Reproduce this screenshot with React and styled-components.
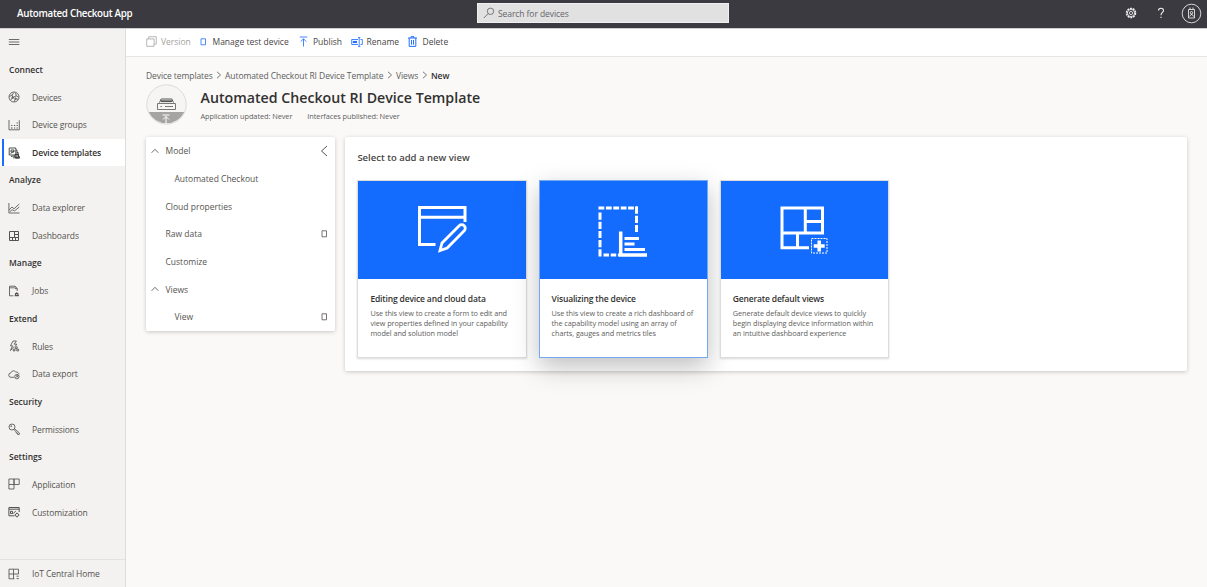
import React from "react";
import styled, { createGlobalStyle } from "styled-components";

const Svg = ({ size = 12, w, h, box, children }) => (
  <svg
    width={w || size}
    height={h || size}
    viewBox={box || "0 0 12 12"}
    fill="none"
    stroke="currentColor"
    strokeWidth="0.85"
  >
    {children}
  </svg>
);

const icons = {
  devices: (
    <Svg>
      <circle cx="6" cy="6" r="5" />
      <path d="M1.5 5.5L4 4l2-2.5M4 4l.8 2.5L2.5 9.2M4.8 6.5l3.4-1.6L7.6 2M8.2 4.9l2.4 1.3M6.2 10.7l1.2-3 2.8.7" />
      <circle cx="4.7" cy="6.6" r=".9" />
      <circle cx="7.5" cy="7.6" r=".7" />
    </Svg>
  ),
  groups: (
    <Svg>
      <path d="M1 1v9.800h10.300V1.300" />
      <path d="M3 9h1.500M6 9h1.200M8.500 9h1.200M3.200 6.500h1.200M6 6.500h1.200M8.600 6.500h1.200M8.600 4h1.200" strokeWidth="1.200" />
    </Svg>
  ),
  templates: (
    <Svg>
      <path d="M1.200 1h6.600v7H1.200zM3 3h3v2H3zM2.500 6.500L6 4M8 3h1v6.200H3.500V10M9 5.500h1.200v5.300H5" />
      <path d="M7 7.500h3.500v2.800H7zM10.500 9.500h1v1.700H7.500" />
    </Svg>
  ),
  explorer: (
    <Svg>
      <path d="M.9 1v10h10.600M1 8l3-3 2 1.800L11.300 2M2 9.500l2.200-1.700 2.500 1L11.300 5" />
    </Svg>
  ),
  dashboards: (
    <Svg>
      <path d="M1.500 1.500h9v9h-9zM6.500 1.500v6M1.500 7.500h9M4.500 7.500v3M6.500 4.500h4M7.500 7.500v3" strokeWidth="1" />
    </Svg>
  ),
  jobs: (
    <Svg>
      <path d="M5.500 10.800h-4V1.200H7l2.200 2.200V6M7 1.200v2.400h2.200M2 2.800h4" />
      <path d="M6.700 10.600h4.200M7.500 10.400V8.600h2.400v1.800M8.700 7.300v1.200" strokeWidth="1.100" />
    </Svg>
  ),
  rules: (
    <Svg>
      <path d="M8.400 1H5L2.500 5.800h2L2.400 10.600 6 6.500M8.400 1L6.200 4.200h2.600L7.500 6" />
      <path d="M7.200 6.800h2v1.600h-2zM5.200 9.200h1.800v1.700H5.200zM8.800 9.200h1.800v1.700H8.800z" />
    </Svg>
  ),
  export: (
    <Svg>
      <path d="M6 9.300H3A2.100 2.100 0 012.800 5c.5-2.200 3.400-3 5-1 1.700-.1 3 .8 3.200 2.300" />
      <circle cx="8.900" cy="8.600" r="2.200" />
      <path d="M7.700 9.700l2-2M8.200 7.700h1.500v1.500" />
    </Svg>
  ),
  permissions: (
    <Svg>
      <circle cx="4" cy="4" r="3" />
      <circle cx="3.200" cy="3.200" r=".5" />
      <path d="M6.400 5.600l4.900 4.300v1.500H9.500V10H8.200V8.800L5.700 6.500" />
    </Svg>
  ),
  application: (
    <Svg>
      <path d="M.9 1h10.300v5.500H.9zM6 1v10H.9V6.500M6 6.500V1" />
    </Svg>
  ),
  customization: (
    <Svg>
      <path d="M6.500 9.800H.9V1.500h10.300V6M.9 3.200h10.300M2.500 5.300h2v2.300h-2zM5.200 7.600L7.700 5" strokeWidth="1" />
      <circle cx="9" cy="9" r="1.600" />
      <path d="M9 6.600v1M9 10.400v1M6.600 9h1M10.400 9h1" />
    </Svg>
  ),
  home: (
    <Svg>
      <path d="M6.500 10.800H1V1.200h9.500V6M5.500 1.200v9.600M1 6h9.500M8.500 8.200h2.300M8.500 10.600h2.300" />
    </Svg>
  ),
};

const nav = [
  { title: "Connect" },
  { icon: "devices", label: "Devices" },
  { icon: "groups", label: "Device groups" },
  { icon: "templates", label: "Device templates", active: true },
  { title: "Analyze" },
  { icon: "explorer", label: "Data explorer" },
  { icon: "dashboards", label: "Dashboards" },
  { title: "Manage" },
  { icon: "jobs", label: "Jobs" },
  { title: "Extend" },
  { icon: "rules", label: "Rules" },
  { icon: "export", label: "Data export" },
  { title: "Security" },
  { icon: "permissions", label: "Permissions" },
  { title: "Settings" },
  { icon: "application", label: "Application" },
  { icon: "customization", label: "Customization" },
];

const tree = [
  { label: "Model", open: true, collapse: true },
  { label: "Automated Checkout", child: true },
  { label: "Cloud properties" },
  { label: "Raw data", device: true },
  { label: "Customize" },
  { label: "Views", open: true },
  { label: "View", child: true, device: true },
];

const EditArt = () => (
  <svg width="56" height="56" viewBox="0 0 56 56" fill="none" stroke="#fff" strokeWidth="3">
    <path d="M22.500 39.500H6.500V2.500h45.500V17M6.500 12.200H52" />
    <path d="M27 45.500l2-7.500 17.200-17.200a3.500 3.500 0 015 5L34.200 43z" strokeWidth="2.800" />
  </svg>
);

const ChartArt = () => (
  <svg width="56" height="56" viewBox="0 0 56 56" fill="none" stroke="#fff" strokeWidth="3">
    <path d="M4.500 3H44" strokeDasharray="5.800 1.600" />
    <path d="M6 7.500V52" strokeDasharray="7.200 2" />
    <path d="M42.500 1.500V28" strokeDasharray="7.200 2" />
    <path d="M9.500 50H25" strokeDasharray="5.500 1.700" />
    <path d="M26.700 26.500V50M25 50h28" strokeWidth="3.500" />
    <path d="M30.500 33.500H45M30.500 39h10M30.500 44.500H51" />
  </svg>
);

const TilesArt = () => (
  <svg width="56" height="56" viewBox="0 0 56 56" fill="none" stroke="#fff" strokeWidth="3">
    <path d="M34 42.700H7V3h40.500v26.500M30.300 3v25M47.500 28H7M30.300 16.500h17.200M22.500 28v14.700" />
    <path d="M36.500 33.500h15.500v14.500h-15.500z" strokeWidth="1" strokeDasharray="2 1" />
    <path d="M44.200 35.500v11M38.700 41h11" strokeWidth="3.500" />
  </svg>
);

const cards = [
  {
    art: <EditArt />,
    title: "Editing device and cloud data",
    lines: ["Use this view to create a form to edit and", "view properties defined in your capability", "model and solution model"],
  },
  {
    art: <ChartArt />,
    title: "Visualizing the device",
    lines: ["Use this view to create a rich dashboard of", "the capability model using an array of", "charts, gauges and metrics tiles"],
    selected: true,
  },
  {
    art: <TilesArt />,
    title: "Generate default views",
    lines: ["Generate default device views to quickly", "begin displaying device information within", "an intuitive dashboard experience"],
  },
];

const PhoneIcon = () => (
  <Svg w={7} h={8} box="0 0 7 8">
    <path d="M1 .8h4.500v6H1z" strokeWidth=".8" />
  </Svg>
);

const Chevron = () => (
  <Svg w={6} h={8} box="0 0 6 8">
    <path d="M1 .8L4.500 4 1 7.200" />
  </Svg>
);

const App = () => {
  return (
    <Page>
      <GlobalStyle />
      <Header>
        <AppName>Automated Checkout App</AppName>
        <Search>
          <Svg size={12}>
            <circle cx="7.500" cy="4.300" r="3.200" />
            <path d="M5.200 6.600L.8 11" />
          </Svg>
          <span>Search for devices</span>
        </Search>
        <HeaderTools>
          <Svg size={12}>
            <circle cx="6" cy="6" r="4.500" strokeWidth="1.500" strokeDasharray="2 .8" />
            <circle cx="6" cy="6" r="3.600" />
            <circle cx="6" cy="6" r="1.600" />
          </Svg>
          <Svg w={8} h={12} box="0 0 8 12">
            <path d="M1.500 3.500C1.500.5 6.500.5 6.500 3.400 6.500 5.500 4 5.500 4 8.300M4 9.700v1.300" strokeWidth="1.100" />
          </Svg>
          <Svg size={21} box="0 0 21 21">
            <circle cx="10.500" cy="10.500" r="9.300" />
            <path d="M7.500 6.500h6v8.500h-6zM9 4.500v2M12 4.500v2M8.700 13.500l1.200-2h1.300l1.200 2" />
            <circle cx="10.500" cy="9.700" r="1.200" />
          </Svg>
        </HeaderTools>
      </Header>
      <Body>
        <Sidebar>
          <NavRow>
            <Svg>
              <path d="M.8 3.500h10.500M.8 6h10.500M.8 8.500h10.500" />
            </Svg>
          </NavRow>
          {nav.map((item) =>
            item.title ? (
              <NavTitle key={item.title}>{item.title}</NavTitle>
            ) : (
              <NavRow key={item.label} $active={item.active}>
                {icons[item.icon]}
                <span>{item.label}</span>
              </NavRow>
            )
          )}
          <HomeRow>
            {icons.home}
            <span>IoT Central Home</span>
          </HomeRow>
        </Sidebar>
        <Main>
          <Toolbar>
            <Tool $width={54} $muted>
              <Svg size={11}>
                <path d="M.8 3.200h8v8h-8zM3 3V.8h8.200v8H9" />
              </Svg>
              <span>Version</span>
            </Tool>
            <Tool $width={99} $gap={5.5}>
              <PhoneIcon />
              <span>Manage test device</span>
            </Tool>
            <Tool $width={52} $gap={5}>
              <Svg w={9} h={11} box="0 0 9 11">
                <path d="M.8 1h7.400M4.500 10.500V3M1.700 5.600l2.800-2.800 2.800 2.800" />
              </Svg>
              <span>Publish</span>
            </Tool>
            <Tool $width={57} $gap={3.5}>
              <Svg w={12} h={10} box="0 0 12 10">
                <path d="M7 7.500H.7v-5H7M9.500 2.500h1.800v5H9.500M8.200.5v9M7 .6h2.400M7 9.400h2.400" />
                <path d="M1.800 5H6" strokeWidth="2.200" />
              </Svg>
              <span>Rename</span>
            </Tool>
            <Tool $width={42} $gap={5.5}>
              <Svg w={9} h={11} box="0 0 9 11">
                <path d="M0 2h9M3 2V.7h3V2M1.200 2v8.400h6.600V2M3.500 4v4.700M5.500 4v4.700" strokeWidth="1" />
              </Svg>
              <span>Delete</span>
            </Tool>
          </Toolbar>
          <Content>
            <Crumbs>
              <Crumb $width={67}>Device templates</Crumb>
              <Chevron />
              <Crumb $width={159}>Automated Checkout RI Device Template</Crumb>
              <Chevron />
              <Crumb $width={23}>Views</Crumb>
              <Chevron />
              <Crumb $strong>New</Crumb>
            </Crumbs>
            <TemplateHead>
              <svg width="41" height="41" viewBox="0 0 41 41" fill="none">
                <circle cx="20.500" cy="20.500" r="19.700" fill="#f6f5f4" />
                <path d="M2.700 28h35.600a19.700 19.700 0 01-35.600 0z" fill="#a5a4a3" />
                <circle cx="20.500" cy="20.500" r="19.700" stroke="#d4d3d2" strokeWidth=".8" />
                <path d="M13.500 18.500l1.700-3.500h10.600l1.700 3.500" stroke="#555" />
                <path d="M15 17.200h11" stroke="#555" strokeWidth="1.800" />
                <path d="M11.500 19.500h18v6h-18z" stroke="#777" />
                <path d="M14.500 22.500h1.500M19 22.500h8" stroke="#777" />
                <path d="M16.500 31h7M20 40v-7.500M17 35.500l3-3 3 3" stroke="#fff" />
              </svg>
              <div>
                <Title>Automated Checkout RI Device Template</Title>
                <Meta>
                  <span>Application updated: Never</span>
                  <span>Interfaces published: Never</span>
                </Meta>
              </div>
            </TemplateHead>
            <Panels>
              <TreePanel>
                {tree.map((row) => (
                  <TreeRow key={row.label} $child={row.child}>
                    <TreeArrow>
                      {row.open && (
                        <Svg w={8} h={6} box="0 0 8 6">
                          <path d="M.6 4.800L4 1.300l3.400 3.500" />
                        </Svg>
                      )}
                    </TreeArrow>
                    <TreeLabel>{row.label}</TreeLabel>
                    {row.collapse && (
                      <Svg w={8} h={12} box="0 0 8 12">
                        <path d="M7 1L1.500 6 7 11" strokeWidth="1" />
                      </Svg>
                    )}
                    {row.device && <PhoneIcon />}
                  </TreeRow>
                ))}
              </TreePanel>
              <ViewPanel>
                <PanelTitle>Select to add a new view</PanelTitle>
                <Cards>
                  {cards.map((card) => (
                    <Card key={card.title} $selected={card.selected}>
                      <Art>{card.art}</Art>
                      <CardBody>
                        <CardTitle>{card.title}</CardTitle>
                        {card.lines.map((line) => (
                          <CardLine key={line}>{line}</CardLine>
                        ))}
                      </CardBody>
                    </Card>
                  ))}
                </Cards>
              </ViewPanel>
            </Panels>
          </Content>
        </Main>
      </Body>
    </Page>
  );
};
export default App;

const GlobalStyle = createGlobalStyle`
  * {
    box-sizing: border-box;
  }
  body {
    margin: 0;
    overflow: hidden;
    font-family: "Open Sans", "Noto Sans", sans-serif;
    font-size: 8.5px;
    color: #484644;
    white-space: nowrap;
  }
  svg {
    display: block;
    flex-shrink: 0;
  }
`;
const Page = styled.div`
  width: 1207px;
  height: 587px;
  display: flex;
  flex-direction: column;
  background: #faf9f8;
`;
const Header = styled.header`
  height: 29px;
  display: grid;
  grid-template-columns: 477px 252px 1fr;
  align-items: center;
  padding-bottom: 2px;
  background: #3b3a40;
  border-bottom: 1px solid #cfcecf;
`;
const AppName = styled.div`
  padding-left: 17px;
  font-size: 9.8px;
  font-weight: 600;
  letter-spacing: -0.28px;
  color: #fff;
`;
const Search = styled.div`
  height: 20px;
  display: flex;
  align-items: center;
  gap: 3px;
  padding-left: 5px;
  background: #e1e1e1;
  border: 1px solid #f0f0f0;
  letter-spacing: -0.08px;
  color: #66646a;
`;
const HeaderTools = styled.div`
  display: flex;
  align-items: center;
  justify-content: flex-end;
  gap: 20px;
  padding-right: 5px;
  color: #f0f0f0;
  svg:last-child {
    margin-left: -4px;
  }
`;
const Body = styled.div`
  flex: 1;
  display: flex;
`;
const Sidebar = styled.nav`
  width: 126px;
  display: flex;
  flex-direction: column;
  background: #f3f2f1;
  border-right: 1px solid #dddcdb;
`;
const NavRow = styled.div`
  height: 27.66px;
  display: flex;
  align-items: center;
  gap: 12px;
  padding-left: ${(props) => (props.$active ? "4px" : "8px")};
  margin-left: ${(props) => (props.$active ? "2px" : "0")};
  border-left: ${(props) => (props.$active ? "2px solid #1a6dff" : "none")};
  background: ${(props) => (props.$active ? "#fff" : "transparent")};
  box-shadow: ${(props) => (props.$active ? "-2px 0 0 #fff" : "none")};
  font-weight: ${(props) => (props.$active ? 600 : 400)};
  letter-spacing: -0.1px;
  color: ${(props) => (props.$active ? "#323130" : "#55534f")};
  &:first-child {
    height: 26.8px;
  }
`;
const NavTitle = styled.div`
  height: 27.66px;
  line-height: 27.66px;
  padding-left: 9px;
  font-weight: 600;
  color: #323130;
`;
const HomeRow = styled(NavRow)`
  height: 28px;
  margin-top: auto;
  border-top: 1px solid #e3e2e1;
`;
const Main = styled.main`
  flex: 1;
`;
const Toolbar = styled.div`
  height: 28px;
  display: flex;
  align-items: center;
  padding: 0 0 2px 20px;
  background: #fff;
  border-bottom: 1px solid #e6e5e4;
`;
const Tool = styled.div`
  width: ${(props) => props.$width}px;
  display: flex;
  align-items: center;
  gap: ${(props) => props.$gap || 4}px;
  color: ${(props) => (props.$muted ? "#a3a2a0" : "#484644")};
  svg {
    color: ${(props) => (props.$muted ? "#a3a2a0" : "#246fff")};
  }
`;
const Content = styled.div`
  padding: 11px 20px 0;
`;
const Crumbs = styled.div`
  height: 14px;
  display: flex;
  align-items: center;
  gap: 3px;
  color: #605e5c;
`;
const Crumb = styled.span`
  width: ${(props) => (props.$width ? `${props.$width}px` : "auto")};
  font-weight: ${(props) => (props.$strong ? 600 : 400)};
  letter-spacing: -0.08px;
  color: ${(props) => (props.$strong ? "#323130" : "#605e5c")};
`;
const TemplateHead = styled.div`
  height: 55px;
  display: flex;
  align-items: flex-start;
  gap: 14px;
  padding-top: 2px;
  svg {
    margin-left: -0.5px;
  }
`;
const Title = styled.h1`
  margin: 4px 0 0;
  font-size: 14.2px;
  line-height: 20px;
  font-weight: 600;
  color: #323130;
`;
const Meta = styled.div`
  display: flex;
  gap: 15px;
  font-size: 7.4px;
  line-height: 16px;
  letter-spacing: -0.08px;
  color: #605e5c;
`;
const Panels = styled.div`
  display: flex;
  align-items: flex-start;
  gap: 10px;
`;
const TreePanel = styled.div`
  width: 189px;
  height: 194px;
  background: #fff;
  border-radius: 2px;
  box-shadow: 0 1px 4px rgba(0, 0, 0, 0.2);
`;
const TreeRow = styled.div`
  height: 27.66px;
  display: flex;
  align-items: center;
  padding: 0 7px 0 ${(props) => (props.$child ? 14 : 5)}px;
  color: #55534f;
`;
const TreeArrow = styled.div`
  width: 14.5px;
`;
const TreeLabel = styled.span`
  flex: 1;
`;
const ViewPanel = styled.section`
  width: 842px;
  height: 234px;
  padding: 12px 12.4px;
  background: #fff;
  border-radius: 2px;
  box-shadow: 0 1px 4px rgba(0, 0, 0, 0.2);
`;
const PanelTitle = styled.h2`
  height: 31px;
  margin: 0;
  font-size: 9.5px;
  line-height: 17px;
  font-weight: 600;
  color: #484644;
`;
const Cards = styled.div`
  display: flex;
  gap: 12px;
`;
const Card = styled.div`
  width: 169.200px;
  height: 178px;
  border: 1px solid ${(props) => (props.$selected ? "#72aaf2" : "#dcdcdc")};
  background: #fff;
  box-shadow: ${(props) =>
    props.$selected ? "0 9px 24px rgba(0, 0, 0, 0.25)" : "0 1px 2px rgba(0, 0, 0, 0.15)"};
`;
const Art = styled.div`
  height: 98px;
  display: flex;
  align-items: center;
  justify-content: center;
  padding: 5px 2px 0 0;
  background: #146cff;
`;
const CardBody = styled.div`
  padding: 13px 0 0 12px;
`;
const CardTitle = styled.div`
  height: 16px;
  line-height: 14px;
  font-size: 8.5px;
  font-weight: 600;
  letter-spacing: -0.16px;
  color: #323130;
`;
const CardLine = styled.div`
  font-size: 7.3px;
  line-height: 10.2px;
  letter-spacing: -0.07px;
  color: #605e5c;
`;
